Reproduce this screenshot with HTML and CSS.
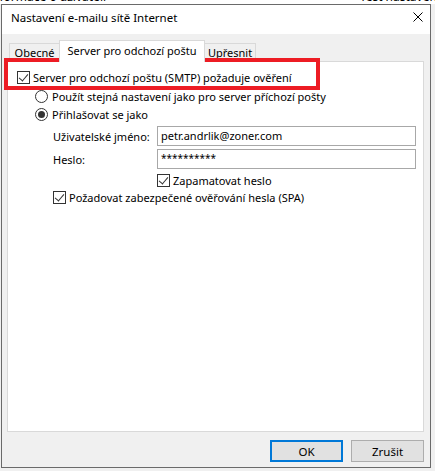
FILE: index.html
```html
<!DOCTYPE html>
<html lang="cs">
<head>
    <meta charset="UTF-8">
    <meta name="viewport" content="width=device-width, initial-scale=1.0">
    <title>Nastavení e-mailu sítě Internet</title>
    <link rel="stylesheet" href="styles.css">
</head>
<body>
    <div class="behind">
        <span class="behind-text">Informace o uživateli</span>
        <span class="behind-text right">Test nastavení účtu</span>
    </div>

    <div class="dialog">
        <header class="titlebar">
            <span class="title">Nastavení e-mailu sítě Internet</span>
            <button class="close" aria-label="Zavřít">
                <svg width="10" height="10" viewBox="0 0 10 10">
                    <path d="M0.5 0.5 L9.5 9.5 M9.5 0.5 L0.5 9.5" stroke="#000" stroke-width="1" fill="none"/>
                </svg>
            </button>
        </header>

        <div class="client">
            <div class="tabs">
                <div class="tab">Obecné</div>
                <div class="tab active">Server pro odchozí poštu</div>
                <div class="tab">Upřesnit</div>
            </div>

            <div class="panel">
                <label class="row check-row">
                    <span class="checkbox checked"></span>
                    <span>Server pro odchozí poštu (SMTP) požaduje ověření</span>
                </label>

                <div class="options">
                    <label class="row radio-first">
                        <span class="radio"></span>
                        <span>Použít stejná nastavení jako pro server příchozí pošty</span>
                    </label>
                    <label class="row">
                        <span class="radio checked"></span>
                        <span>Přihlašovat se jako</span>
                    </label>

                    <div class="sub">
                        <div class="credentials">
                            <span class="field-label">Uživatelské jméno:</span>
                            <div class="textbox">petr.andrlik@zoner.com</div>
                            <span class="field-label">Heslo:</span>
                            <div class="textbox password">**********</div>
                        </div>
                        <label class="row remember">
                            <span class="checkbox checked"></span>
                            <span>Zapamatovat heslo</span>
                        </label>
                        <label class="row spa">
                            <span class="checkbox checked"></span>
                            <span>Požadovat zabezpečené ověřování hesla (SPA)</span>
                        </label>
                    </div>
                </div>
            </div>

            <div class="buttons">
                <button class="btn default">OK</button>
                <button class="btn">Zrušit</button>
            </div>
        </div>

        <div class="highlight"></div>
    </div>
</body>
</html>
```

FILE: styles.css
```css
body {
    margin: 0;
    background-color: #f0f0f0;
    font-family: "Noto Sans", "Segoe UI", sans-serif;
    font-size: 11px;
    color: #000;
}

/* window lying behind the dialog, only its bottom edge shows */
.behind {
    display: flex;
    justify-content: space-between;
    height: 4px;
    overflow: hidden;
    background-color: #fff;
}

.behind-text {
    margin-top: -11px;
    margin-left: -12px;
    line-height: 16px;
    font-size: 12px;
}

.behind-text.right {
    margin-left: 0;
    margin-right: -33px;
}

.dialog {
    position: relative;
    width: 428px;
    margin-left: 1px;
    border: 1px solid #6a6a6a;
    background-color: #f0f0f0;
}

.titlebar {
    display: flex;
    align-items: center;
    justify-content: space-between;
    height: 29px;
    padding-left: 9px;
    background-color: #fff;
    font-size: 11.5px;
}

.title {
    margin-top: -4px;
}

.close {
    display: flex;
    padding: 0;
    margin: -6px 7px 0 0;
    border: none;
    background: none;
}

.client {
    padding: 6px 6px 5px 5px;
}

.tabs {
    display: flex;
    align-items: flex-end;
    height: 22px;
    margin-bottom: -1px;
    padding-left: 2px;
    white-space: nowrap;
}

.tab {
    height: 17px;
    margin-bottom: 1px;
    border: 1px solid #d9d9d9;
    border-bottom: none;
    background-color: #f0f0f0;
    text-align: center;
    line-height: 17px;
    box-sizing: border-box;
}

.tab:nth-child(1) {
    width: 51px;
    height: 18px;
}

.tab:nth-child(3) {
    width: 52px;
    height: 18px;
    margin-left: -1px;
}

.tab.active {
    position: relative;
    z-index: 1;
    width: 146px;
    height: 22px;
    margin-bottom: 0;
    margin-left: -1px;
    background-color: #fff;
    line-height: 19px;
}

.panel {
    height: 363px;
    padding: 6px 0 0 9px;
    border: 1px solid #d9d9d9;
    background-color: #fff;
}

.row {
    display: flex;
    align-items: center;
    height: 18px;
    gap: 3px;
    white-space: nowrap;
}

.checkbox {
    position: relative;
    flex: none;
    width: 13px;
    height: 13px;
    border: 1px solid #333;
    background-color: #fff;
    box-sizing: border-box;
}

.checkbox.checked::after {
    content: "";
    position: absolute;
    left: 3px;
    top: 0px;
    width: 4px;
    height: 8px;
    border-right: 1px solid #333;
    border-bottom: 1px solid #333;
    transform: rotate(40deg);
}

.radio {
    position: relative;
    flex: none;
    width: 13px;
    height: 13px;
    margin-right: 1px;
    border: 1px solid #333;
    border-radius: 50%;
    background-color: #fff;
    box-sizing: border-box;
}

.radio.checked::after {
    content: "";
    position: absolute;
    left: 2px;
    top: 2px;
    width: 7px;
    height: 7px;
    border-radius: 50%;
    background-color: #333;
}

.options {
    padding-left: 18px;
}

.radio-first {
    margin-top: 1px;
}

.sub {
    padding-left: 18px;
}

.credentials {
    display: grid;
    grid-template-columns: 104px 259px;
    row-gap: 3px;
    align-items: center;
    margin-top: 3px;
    white-space: nowrap;
}

.textbox {
    height: 20px;
    padding-left: 3px;
    border: 1px solid #a8a8a8;
    line-height: 18px;
    box-sizing: border-box;
}

.textbox.password {
    font-size: 10px;
    line-height: 16px;
}

.remember {
    height: 17px;
    margin-top: 3px;
    margin-left: 104px;
}

.spa {
    height: 17px;
}

.buttons {
    display: flex;
    justify-content: flex-end;
    gap: 8px;
    padding-top: 8px;
}

.btn {
    width: 73px;
    height: 22px;
    padding: 0;
    border: 1px solid #adadad;
    background-color: #e1e1e1;
    font-family: inherit;
    font-size: 11.5px;
    color: #000;
}

.btn.default {
    border: 2px solid #0078d7;
}

/* red annotation frame drawn over the screenshot */
.highlight {
    position: absolute;
    left: 2px;
    top: 53px;
    width: 308px;
    height: 24px;
    border: 4px solid #ed1c24;
}
```
